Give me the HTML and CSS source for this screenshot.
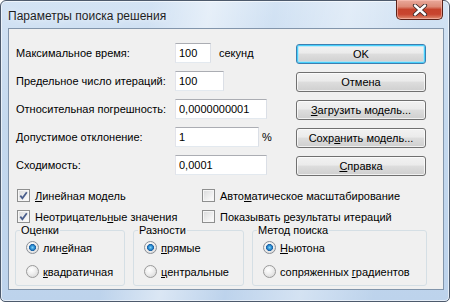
FILE: index.html
```html
<!DOCTYPE html>
<html lang="ru">
<head>
<meta charset="utf-8">
<title>Параметры поиска решения</title>
<link rel="stylesheet" href="styles.css">
</head>
<body>
<div class="window">
  <div class="titlebar">
    <span class="title">Параметры поиска решения</span>
    <button class="close" aria-label="Закрыть">
      <svg width="20" height="12" viewBox="0 0 20 12">
        <path d="M5 1.5 L15 10.5 M15 1.5 L5 10.5" stroke="#3b2a2a" stroke-width="4.2" stroke-linecap="round"/>
        <path d="M5 1.5 L15 10.5 M15 1.5 L5 10.5" stroke="#ffffff" stroke-width="2.4" stroke-linecap="round"/>
      </svg>
    </button>
  </div>
  <div class="client">
    <div class="top">
      <div class="form">
        <div class="row"><label class="lbl">Максимальное время:</label><input class="tb w36" value="100"><span class="suffix sec">секунд</span></div>
        <div class="row"><label class="lbl">Предельное число итераций:</label><input class="tb w49" value="100"></div>
        <div class="row"><label class="lbl">Относительная погрешность:</label><input class="tb w92" value="0,0000000001"></div>
        <div class="row"><label class="lbl">Допустимое отклонение:</label><input class="tb w84" value="1"><span class="suffix pct">%</span></div>
        <div class="row"><label class="lbl">Сходимость:</label><input class="tb w92" value="0,0001"></div>
      </div>
      <div class="buttons">
        <button class="btn default">OK</button>
        <button class="btn">Отмена</button>
        <button class="btn"><u>З</u>агрузить модель...</button>
        <button class="btn">Сохр<u>а</u>нить модель...</button>
        <button class="btn"><u>С</u>правка</button>
      </div>
    </div>
    <div class="checks">
      <div class="checkcol first">
        <div class="check"><span class="cb on"><svg width="11" height="11" viewBox="0 0 11 11"><path d="M2.3 5.6 L4.4 8.2 L8.8 2.2" fill="none" stroke="#4a5e8c" stroke-width="1.8"/></svg></span><span><u>Л</u>инейная модель</span></div>
        <div class="check"><span class="cb on"><svg width="11" height="11" viewBox="0 0 11 11"><path d="M2.3 5.6 L4.4 8.2 L8.8 2.2" fill="none" stroke="#4a5e8c" stroke-width="1.8"/></svg></span><span>Неотрицатель<u>н</u>ые значения</span></div>
      </div>
      <div class="checkcol">
        <div class="check"><span class="cb"></span><span>Авто<u>м</u>атическое масштабирование</span></div>
        <div class="check"><span class="cb"></span><span>Показывать <u>р</u>езультаты итераций</span></div>
      </div>
    </div>
    <div class="groups">
      <fieldset class="group g1">
        <legend>Оценки</legend>
        <div class="radio"><span class="rb on"></span><span>лин<u>е</u>йная</span></div>
        <div class="radio"><span class="rb"></span><span><u>к</u>вадратичная</span></div>
      </fieldset>
      <fieldset class="group g2">
        <legend>Разности</legend>
        <div class="radio"><span class="rb on"></span><span><u>п</u>рямые</span></div>
        <div class="radio"><span class="rb"></span><span><u>ц</u>ентральные</span></div>
      </fieldset>
      <fieldset class="group g3">
        <legend>Метод поиска</legend>
        <div class="radio"><span class="rb on"></span><span><u>Н</u>ьютона</span></div>
        <div class="radio"><span class="rb"></span><span>сопряженных <u>г</u>радиентов</span></div>
      </fieldset>
    </div>
  </div>
</div>
</body>
</html>
```

FILE: styles.css
```css
html, body {
  margin: 0;
  padding: 0;
  background: #ffffff;
}

body {
  font-family: "Liberation Sans", Arial, sans-serif;
  font-size: 11px;
  color: #000;
}

.window {
  box-sizing: border-box;
  width: 450px;
  height: 302px;
  border: 1px solid #4d5a6c;
  border-radius: 6px 6px 5px 5px;
  background:
    linear-gradient(100deg, rgba(255,255,255,0) 30%, rgba(255,255,255,0.45) 42%, rgba(255,255,255,0) 55%, rgba(255,255,255,0.35) 70%, rgba(255,255,255,0) 85%),
    linear-gradient(180deg, #d3e3f4 0%, #c5d9ee 40%, #bdd3ec 100%);
  box-shadow: inset 0 0 0 1px rgba(255,255,255,0.6);
  padding: 0 5px 11px 7px;
  display: flex;
  flex-direction: column;
}

.titlebar {
  height: 27px;
  display: flex;
  align-items: flex-start;
}

.title {
  font-size: 12px;
  color: #1e1e1e;
  padding-top: 8px;
  line-height: 14px;
  text-shadow: 0 0 6px rgba(255,255,255,0.9);
}

.close {
  margin-left: auto;
  margin-right: 1px;
  margin-top: -1px;
  width: 47px;
  height: 20px;
  padding: 0;
  border: 1px solid #5b2218;
  border-top: none;
  border-radius: 0 0 5px 5px;
  background: linear-gradient(180deg, #e9a99b 0%, #dd8a77 35%, #c6432c 50%, #c8452f 75%, #df8b6f 100%);
  box-shadow: inset 0 0 0 1px rgba(255,200,190,0.55);
  display: flex;
  align-items: center;
  justify-content: center;
}

.client {
  flex: 1;
  border: 1px solid #8295ab;
  background: #f0f0f0;
  padding: 14px 0 0 7px;
  display: flex;
  flex-direction: column;
}

.top {
  display: flex;
}

.form {
  width: 280px;
  display: flex;
  flex-direction: column;
  gap: 8px;
}

.row {
  display: flex;
  align-items: center;
  height: 20px;
}

.lbl {
  width: 159px;
  flex: none;
}

.tb {
  box-sizing: border-box;
  height: 20px;
  padding: 0 3px;
  margin: 0;
  border: 1px solid;
  border-color: #abadb3 #dbdfe6 #e3e9ef #e2e3ea;
  background: #fff;
  font-family: inherit;
  font-size: 11px;
  color: #000;
  outline: none;
}

.w36 { width: 36px; }
.w49 { width: 49px; }
.w84 { width: 84px; }
.w92 { width: 92px; }

.sec { margin-left: 8px; }
.pct { margin-left: 3px; }

.buttons {
  width: 130px;
  display: flex;
  flex-direction: column;
  gap: 8px;
  padding-top: 1px;
}

.btn {
  box-sizing: border-box;
  height: 20px;
  padding: 0;
  margin: 0;
  border: 1px solid #707070;
  border-radius: 3px;
  background: linear-gradient(180deg, #f2f2f2 0%, #ebebeb 45%, #dddddd 50%, #cfcfcf 100%);
  box-shadow: inset 0 0 0 1px rgba(255,255,255,0.7);
  font-family: inherit;
  font-size: 11px;
  color: #000;
}

.btn.default {
  border-color: #3c7fb1;
  box-shadow: inset 0 0 0 1px #48d0fb, inset 0 0 0 2px rgba(160,230,255,0.6);
}

.checks {
  display: flex;
  margin-top: 13px;
  padding-left: 1px;
}

.checkcol {
  display: flex;
  flex-direction: column;
  gap: 8px;
}

.checkcol.first {
  width: 185px;
}

.check {
  display: flex;
  align-items: center;
  height: 13px;
  gap: 5px;
}

.cb {
  box-sizing: border-box;
  width: 13px;
  height: 13px;
  border: 1px solid #8e8f8f;
  background: linear-gradient(135deg, #d9dadb 0%, #f4f4f4 70%, #ffffff 100%);
  box-shadow: inset 0 0 0 1px #f6f6f6;
  display: flex;
  align-items: center;
  justify-content: center;
  flex: none;
}

.groups {
  display: flex;
  gap: 8px;
  margin-top: 1px;
  margin-left: -1px;
}

.group {
  box-sizing: border-box;
  margin: 0;
  padding: 4px 0 0 10px;
  height: 62px;
  border: 1px solid #d5dfe5;
  border-radius: 3px;
  display: flex;
  flex-direction: column;
  gap: 11px;
}

.group legend {
  padding: 0 1px;
  margin-left: -6px;
  line-height: 13px;
}

.g1 { width: 110px; }
.g2 { width: 111px; }
.g3 { width: 175px; }

.radio {
  display: flex;
  align-items: center;
  height: 13px;
  gap: 4px;
}

.rb {
  box-sizing: border-box;
  width: 13px;
  height: 13px;
  border-radius: 50%;
  border: 1px solid #9a9a9a;
  background: radial-gradient(circle at 40% 35%, #ffffff 0%, #f0f0f0 40%, #d2d2d2 100%);
  flex: none;
}

.rb.on {
  border-color: #8a8f96;
  background:
    radial-gradient(circle at 50% 50%, #7ed2f6 0%, #2e8fd3 25%, #17579a 45%, rgba(0,0,0,0) 47%),
    radial-gradient(circle at 40% 35%, #ffffff 0%, #eeeeee 50%, #cfcfcf 100%);
}

u {
  text-decoration: underline;
  text-underline-offset: 1px;
}
```
